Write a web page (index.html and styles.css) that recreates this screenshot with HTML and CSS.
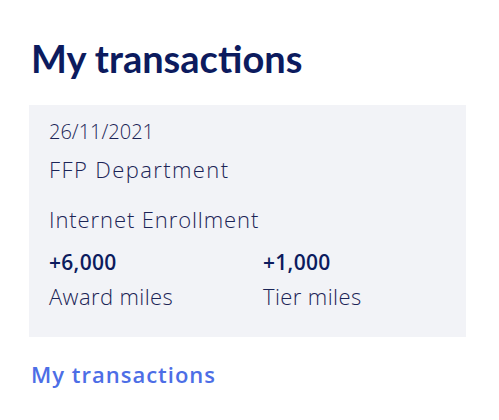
FILE: index.html
```html
<!DOCTYPE html>
<html lang="en">
<head>
<meta charset="utf-8">
<title>My transactions</title>
<link rel="stylesheet" href="styles.css">
</head>
<body>
<main class="page">
  <h1 class="title">My transactions</h1>
  <section class="card">
    <div class="date">26/11/2021</div>
    <div class="partner">FFP Department</div>
    <div class="desc">Internet Enrollment</div>
    <div class="miles">
      <div class="mile">
        <div class="amount">+6,000</div>
        <div class="label">Award miles</div>
      </div>
      <div class="mile">
        <div class="amount">+1,000</div>
        <div class="label">Tier miles</div>
      </div>
    </div>
  </section>
  <a class="link" href="#">My transactions</a>
</main>
</body>
</html>
```
FILE: styles.css
```css
html, body {
  margin: 0;
  padding: 0;
  background: #ffffff;
}
body {
  font-family: "Open Sans", "Noto Sans", sans-serif;
  color: #1b2456;
}
.page {
  padding: 0 33px 0 29px;
}
.title {
  margin: 0;
  padding-top: 34px;
  padding-left: 2px;
  font-family: Lato, "Open Sans", sans-serif;
  font-size: 38px;
  line-height: 48px;
  font-weight: 700;
  color: #0c1b5e;
}
.card {
  margin-top: 23px;
  background: #f2f3f7;
  padding: 15px 20px 28px;
}
.date {
  font-size: 20px;
  line-height: 24px;
  font-weight: 300;
}
.partner {
  margin-top: 11px;
  font-size: 22px;
  line-height: 28px;
  font-weight: 300;
  letter-spacing: 1.4px;
}
.desc {
  margin-top: 22px;
  font-size: 22px;
  line-height: 28px;
  font-weight: 300;
  letter-spacing: 0.9px;
}
.miles {
  margin-top: 16px;
  display: grid;
  grid-template-columns: 214px 1fr;
}
.amount {
  font-size: 21px;
  line-height: 26px;
  font-weight: 600;
  letter-spacing: 0.3px;
  color: #0c1b5e;
}
.label {
  margin-top: 8px;
  font-size: 22px;
  line-height: 26px;
  font-weight: 300;
  letter-spacing: 0.4px;
}
.link {
  display: block;
  margin-top: 23px;
  padding-left: 2px;
  font-size: 22px;
  line-height: 28px;
  font-weight: 600;
  letter-spacing: 1px;
  color: #4d6ee6;
  text-decoration: none;
}
```
